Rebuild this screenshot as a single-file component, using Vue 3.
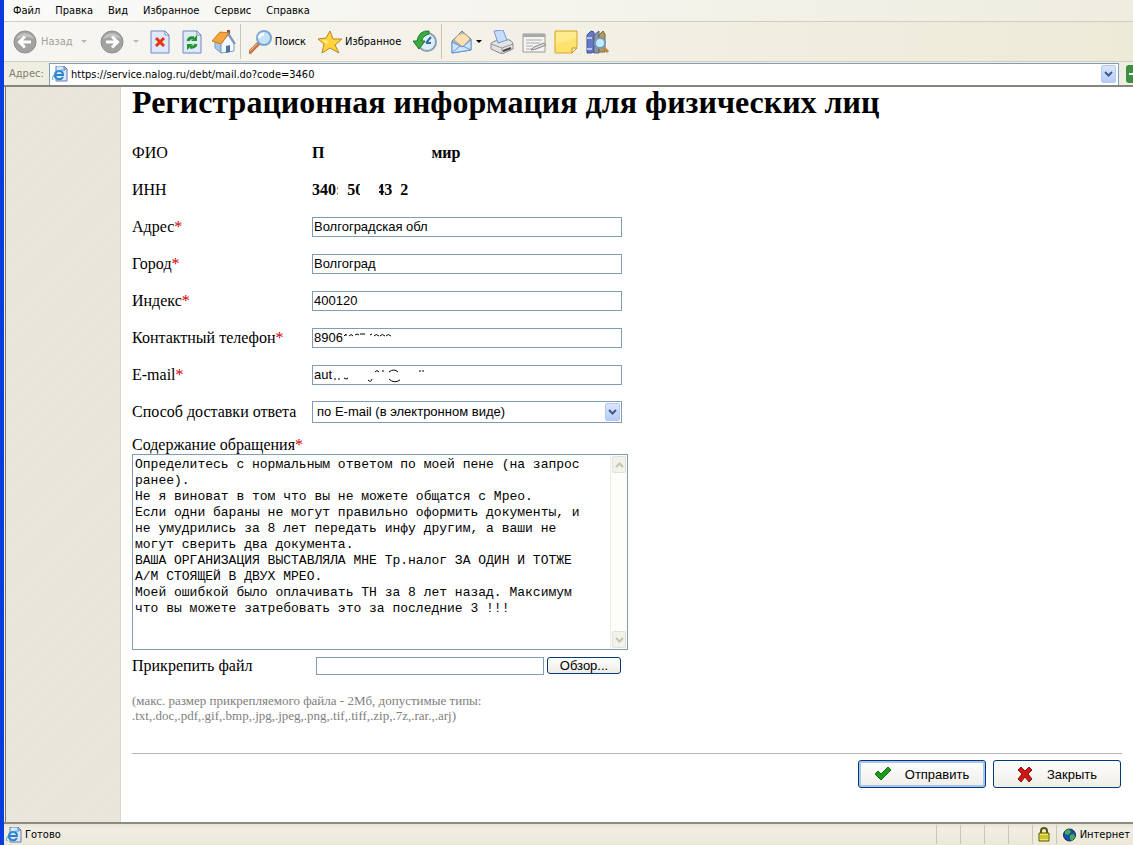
<script setup>
import { ref } from 'vue'

// Browser menu items
const menu = ['Файл', 'Правка', 'Вид', 'Избранное', 'Сервис', 'Справка']

const url = ref('https://service.nalog.ru/debt/mail.do?code=3460')

// Text fields of the form
const fields = ref([
  { id: 'address', label: 'Адрес', value: 'Волгоградская обл' },
  { id: 'city', label: 'Город', value: 'Волгоград' },
  { id: 'index', label: 'Индекс', value: '400120' },
  { id: 'phone', label: 'Контактный телефон', value: '8906' },
  { id: 'email', label: 'E-mail', value: 'aut' }
])

const delivery = ref('email')
const fileName = ref('')

const message = ref(
  [
    'Определитесь с нормальным ответом по моей пене (на запрос ранее).',
    'Не я виноват в том что вы не можете общатся с Мрео.',
    'Если одни бараны не могут правильно оформить документы, и не умудрились за 8 лет передать инфу другим, а ваши не могут сверить два документа.',
    'ВАША ОРГАНИЗАЦИЯ ВЫСТАВЛЯЛА МНЕ Тр.налог ЗА ОДИН И ТОТЖЕ А/М СТОЯЩЕЙ В ДВУХ МРЕО.',
    'Моей ошибкой было оплачивать ТН за 8 лет назад. Максимум что вы можете затребовать это за последние 3 !!!'
  ].join('\n')
)
</script>

<template>
  <div class="browser">
    <!-- Menu bar -->
    <nav class="menu-bar">
      <button v-for="item in menu" :key="item" type="button">{{ item }}</button>
    </nav>

    <!-- Toolbar -->
    <div class="toolbar">
      <button type="button" class="tool back" disabled>
        <svg width="24" height="24" viewBox="0 0 24 24">
          <circle cx="12" cy="12" r="11" fill="#a2a2a0" stroke="#8f8f8d" />
          <path d="M3 9a10 10 0 0 1 18 0q-9-4-18 0z" fill="#c4c4c2" />
          <path d="M18 12H7M12 6.500l-5.500 5.500 5.500 5.500" fill="none" stroke="#fff" stroke-width="3" />
        </svg>
        <span>Назад</span>
        <i class="arrow"></i>
      </button>
      <button type="button" class="tool forward" disabled aria-label="Вперед">
        <svg width="24" height="24" viewBox="0 0 24 24">
          <circle cx="12" cy="12" r="11" fill="#a2a2a0" stroke="#8f8f8d" />
          <path d="M3 9a10 10 0 0 1 18 0q-9-4-18 0z" fill="#c4c4c2" />
          <path d="M6 12h11M12 6.500l5.500 5.500-5.500 5.500" fill="none" stroke="#fff" stroke-width="3" />
        </svg>
        <i class="arrow"></i>
      </button>
      <button type="button" class="tool" aria-label="Остановить">
        <svg width="24" height="24" viewBox="0 0 24 24">
          <path d="M3 1h14l4 4v18H3z" fill="#dfe9fb" stroke="#7388bd" />
          <path d="M17 1v4h4z" fill="#fff" stroke="#7388bd" />
          <path d="M8 8l8 8M16 8l-8 8" stroke="#e5350f" stroke-width="3" />
        </svg>
      </button>
      <button type="button" class="tool" aria-label="Обновить">
        <svg width="24" height="24" viewBox="0 0 24 24">
          <path d="M3 1h14l4 4v18H3z" fill="#dfe9fb" stroke="#7388bd" />
          <path d="M17 1v4h4z" fill="#fff" stroke="#7388bd" />
          <path d="M8 11q1-4 6-3M16 14q-1 4-6 3" fill="none" stroke="#21962a" stroke-width="3" />
          <path d="M17 5v6h-6zM7 20v-6h6z" fill="#21962a" />
        </svg>
      </button>
      <button type="button" class="tool" aria-label="Домой">
        <svg width="24" height="24" viewBox="0 0 24 24">
          <path d="M15 0h3v6h-3z" fill="#a9482c" />
          <path d="M3 11l6 3v9l-6-5z" fill="#a9c6ea" stroke="#7c9cc8" />
          <path d="M9 14l7-9 6 9v7l-13 2z" fill="#f5f9ff" stroke="#7c9cc8" />
          <path d="M14 16l4-1v7l-4 1z" fill="#4d74a8" />
          <path d="M0 11L8 2l9 1-8 11z" fill="#f3a63c" stroke="#cf7b20" />
          <path d="M16 3l7 11" stroke="#8093b5" stroke-width="2" />
        </svg>
      </button>
      <i class="divider"></i>
      <button type="button" class="tool search">
        <svg width="24" height="24" viewBox="0 0 24 24">
          <path d="M9 14l-8 8" stroke="#c7774a" stroke-width="4" stroke-linecap="round" />
          <path d="M8 14l-7 7" stroke="#f0bd94" stroke-width="1" />
          <circle cx="15" cy="8" r="7" fill="#c4e4fb" stroke="#7ba5d3" stroke-width="2" />
          <path d="M10 8q1-4 5-4" fill="none" stroke="#fff" stroke-width="3" />
        </svg>
        <span>Поиск</span>
      </button>
      <button type="button" class="tool favorites">
        <svg width="25" height="24" viewBox="0 0 25 24">
          <path d="M12 1l3 8 9 0-7 6 4 8-9-5-8 5 2-9-6-5 8-1z" fill="#fdd43a" stroke="#bd8420" stroke-linejoin="round" />
          <path d="M12 4l-2 7-6-1 5 4" fill="#fff3a0" />
        </svg>
        <span>Избранное</span>
      </button>
      <button type="button" class="tool" aria-label="Журнал">
        <svg width="24" height="24" viewBox="0 0 24 24">
          <circle cx="14" cy="12" r="9" fill="#dceefa" stroke="#8c9fae" stroke-width="2" />
          <path d="M13 13l5-6M13 13h5" stroke="#356da8" stroke-width="2" />
          <path d="M16 1Q6 0 4 11H0l6 8 6-8H9q0-5 7-7z" fill="#3baa3f" stroke="#1c7928" />
        </svg>
      </button>
      <i class="divider"></i>
      <button type="button" class="tool mail" aria-label="Почта">
        <svg width="24" height="24" viewBox="0 0 24 24">
          <path d="M2 11L12 1l9 8v11L2 23z" fill="#8bb8ed" stroke="#6488b9" />
          <path d="M4 10q8-13 16-1l-7 8z" fill="#fce1b5" stroke="#d7a56f" />
          <path d="M2 12l10 5 9-7v10L2 23z" fill="#cde4fd" stroke="#6a94cb" />
          <path d="M2 23l8-7M21 20l-8-4" stroke="#6a94cb" />
        </svg>
        <i class="arrow dark"></i>
      </button>
      <button type="button" class="tool" aria-label="Печать">
        <svg width="24" height="24" viewBox="0 0 24 24">
          <path d="M1 13l8-4 11 1 3 3v6l-11 5-11-5z" fill="#e2e2e3" stroke="#8b8b90" />
          <path d="M4 1l9-1 4 10-9 3z" fill="#c5ddfa" stroke="#7899c9" />
          <path d="M1 14l11 4 11-4M12 18v5" fill="none" stroke="#94949a" />
          <path d="M13 21l8-3" stroke="#444" stroke-width="2" />
        </svg>
      </button>
      <button type="button" class="tool" aria-label="Правка">
        <svg width="24" height="24" viewBox="0 0 24 24">
          <path d="M1 4h22v18H1z" fill="#f4f4f2" stroke="#989898" />
          <path d="M1 4h22v3H1z" fill="#a9a9a9" />
          <path d="M4 10h16M4 13h14M4 16h7M4 19h6" stroke="#aaa" />
          <path d="M9 20l3-3 10-4 2 2-10 4z" fill="#ddd" stroke="#888" />
        </svg>
      </button>
      <button type="button" class="tool" aria-label="Заметки">
        <svg width="24" height="24" viewBox="0 0 24 24">
          <path d="M1 1h22v16l-5 6H1z" fill="#ffe16e" stroke="#d2a52c" />
          <path d="M2 2h20v6L2 14z" fill="#ffea8c" />
          <path d="M18 23v-5h5z" fill="#fff5bd" stroke="#c39423" />
        </svg>
      </button>
      <button type="button" class="tool" aria-label="Справочные материалы">
        <svg width="24" height="24" viewBox="0 0 24 24">
          <path d="M1 5l4-4 3 1v20l-3 1H1z" fill="#6678c8" stroke="#43519a" />
          <path d="M1 8h5M1 19h5" stroke="#b7c2f4" stroke-width="2" />
          <path d="M8 5l5-4v22H8z" fill="#8a93a8" stroke="#5c6479" />
          <path d="M13 5l4-4 2 3v18h-6z" fill="#b39a5d" stroke="#7a683d" />
          <path d="M17 17l5 5" stroke="#bc8a45" stroke-width="3" />
          <circle cx="14" cy="13" r="5" fill="#c9eafa" stroke="#6d9cc5" stroke-width="2" />
        </svg>
      </button>
    </div>

    <!-- Address bar -->
    <div class="address-bar">
      <label for="url">Адрес:</label>
      <div class="address-box">
        <svg class="ie" width="16" height="16" viewBox="0 0 16 16">
          <path d="M4 0h8l3 3v12H4z" fill="#dbe8fb" stroke="#5f7db4" />
          <path d="M12 0v3h3" fill="none" stroke="#5f7db4" />
          <path d="M11 11q-2 3-5 2-4-1-3-5 1-3 4-3 4 0 4 4H4" fill="none" stroke="#2d83c9" stroke-width="2" />
          <path d="M1 14q-2-3 4-8 5-3 8-2" fill="none" stroke="#3a9bdc" />
        </svg>
        <input id="url" v-model="url" type="text" />
        <button type="button" class="drop" aria-label="Показать список">
          <svg width="9" height="6" viewBox="0 0 9 6"><path d="M1 1l3.500 3.500L8 1" fill="none" stroke="#3f5a87" stroke-width="2" /></svg>
        </button>
      </div>
      <button type="button" class="go" aria-label="Переход">
        <svg width="7" height="18" viewBox="0 0 7 18"><path d="M3 9h4" stroke="#fff" stroke-width="2" /></svg>
      </button>
    </div>

    <!-- Page -->
    <div class="page">
      <aside class="side"></aside>
      <main class="content">
        <h1>Регистрационная информация для физических лиц</h1>
        <form @submit.prevent>
          <div class="row">
            <span class="name">ФИО</span>
            <div class="person"><b>П</b><b>мир</b></div>
          </div>
          <div class="row">
            <span class="name">ИНН</span>
            <!-- Some digits are partly erased -->
            <div class="inn">
              <b class="worn-end">340:</b>
              <b class="worn-end">50</b>
              <b class="worn-start">43</b>
              <b>2</b>
            </div>
          </div>
          <div v-for="field in fields" :key="field.id" class="row">
            <label class="name" :for="field.id">{{ field.label }}<em>*</em></label>
            <div class="control">
              <input :id="field.id" v-model="field.value" type="text" />
              <!-- Remains of the erased characters -->
              <svg v-if="field.id === 'phone'" class="remains phone" width="60" height="20" viewBox="0 0 60 20">
                <path d="M1 8l2-2v2M6 8q2-3 4 0M12 7q2-2 4 0M17 6h5M27 7l2-1M31 8q2-3 5 0M37 8q2-3 5 0M43 8q2-3 5 0" fill="none" stroke="#000" />
              </svg>
              <svg v-if="field.id === 'email'" class="remains email" width="96" height="20" viewBox="0 0 96 20">
                <path d="M1 14h2M5 14h2M11 13q2 2 4 0M35 15q3 3 4-1M42 7q2-3 4 0M50 5v2M56 7q5-4 9 0M56 14q5 5 11 1M90 5v2M87 5v2" fill="none" stroke="#000" />
              </svg>
            </div>
          </div>
          <div class="row">
            <label class="name" for="delivery">Способ доставки ответа</label>
            <div class="control select">
              <select id="delivery" v-model="delivery">
                <option value="email">по E-mail (в электронном виде)</option>
                <option value="post">по почте</option>
              </select>
              <span class="drop">
                <svg width="9" height="6" viewBox="0 0 9 6"><path d="M1 1l3.500 3.500L8 1" fill="none" stroke="#3f5a87" stroke-width="2" /></svg>
              </span>
            </div>
          </div>

          <label class="message-label" for="message">Содержание обращения<em>*</em></label>
          <div class="message">
            <textarea id="message" v-model="message" spellcheck="false"></textarea>
            <div class="scrollbar">
              <span><svg width="9" height="6" viewBox="0 0 9 6"><path d="M1 5l3.500-3.500L8 5" fill="none" stroke="#c3c1b4" stroke-width="2" /></svg></span>
              <span><svg width="9" height="6" viewBox="0 0 9 6"><path d="M1 1l3.500 3.500L8 1" fill="none" stroke="#c3c1b4" stroke-width="2" /></svg></span>
            </div>
          </div>

          <div class="file-row">
            <label for="file">Прикрепить файл</label>
            <input id="file" v-model="fileName" type="text" />
            <button type="button">Обзор...</button>
          </div>
          <p class="note">
            (макс. размер прикрепляемого файла - 2Мб, допустимые типы:<br />
            .txt,.doc,.pdf,.gif,.bmp,.jpg,.jpeg,.png,.tif,.tiff,.zip,.7z,.rar.,.arj)
          </p>

          <div class="actions">
            <button type="submit" class="primary">
              <svg width="16" height="14" viewBox="0 0 16 14"><path d="M0 7l3-3 3 3 7-7 3 3-10 10z" fill="#1c9a1f" stroke="#127016" stroke-width="1" /></svg>
              <span>Отправить</span>
            </button>
            <button type="button">
              <svg width="16" height="15" viewBox="0 0 16 15"><path d="M1 3l3-3 4 4 4-4 3 3-4 4 4 5-3 3-4-5-4 5-3-3 4-5z" fill="#cf1515" stroke="#8f1010" stroke-width="1" /></svg>
              <span>Закрыть</span>
            </button>
          </div>
        </form>
      </main>
    </div>

    <!-- Status bar -->
    <footer class="status">
      <svg class="ie" width="16" height="16" viewBox="0 0 16 16">
        <path d="M4 0h8l3 3v12H4z" fill="#dbe8fb" stroke="#5f7db4" />
        <path d="M12 0v3h3" fill="none" stroke="#5f7db4" />
        <path d="M11 11q-2 3-5 2-4-1-3-5 1-3 4-3 4 0 4 4H4" fill="none" stroke="#2d83c9" stroke-width="2" />
        <path d="M1 14q-2-3 4-8 5-3 8-2" fill="none" stroke="#3a9bdc" />
      </svg>
      <span class="ready">Готово</span>
      <i v-for="n in 4" :key="n" class="cell"></i>
      <span class="cell">
        <svg width="12" height="15" viewBox="0 0 12 15">
          <path d="M3 7V4q0-3 3-3t3 3v3" fill="none" stroke="#57570a" stroke-width="2" />
          <path d="M1 6h10v8H1z" fill="#efe94a" stroke="#57570a" />
          <path d="M2 9h8M2 11h8" stroke="#a5a01e" />
        </svg>
      </span>
      <span class="zone">
        <svg width="13" height="14" viewBox="0 0 13 14">
          <circle cx="6.500" cy="7" r="6" fill="#1c4da8" stroke="#12295e" />
          <path d="M2 3l4-2 2 3-3 3-3-1zM7 7l4-1 1 3-3 4-2-2z" fill="#45b04a" />
        </svg>
        Интернет
      </span>
    </footer>
  </div>
</template>

<style>
body {
  margin: 0;
}
</style>

<style scoped>
.browser {
  display: flex;
  flex-direction: column;
  box-sizing: border-box;
  min-height: 100vh;
  border-left: 4px solid #0a3be0;
  background: #f1efe2;
  color: #000;
  font: 11px "DejaVu Sans Condensed", "DejaVu Sans", sans-serif;
  overflow: hidden;
}

button,
input,
select,
textarea {
  box-sizing: border-box;
  margin: 0;
  color: inherit;
  outline: none;
}

svg {
  display: block;
  flex: none;
}

/* Menu bar */
.menu-bar {
  display: flex;
  gap: 15px;
  height: 21px;
  padding-left: 9px;
  border-bottom: 1px solid #d2cfc0;
  background: linear-gradient(90deg, #fafaf9, #efede0);
}

.menu-bar button {
  padding: 0;
  border: 0;
  background: none;
  font: inherit;
}

/* Toolbar */
.toolbar {
  display: flex;
  align-items: center;
  gap: 8px;
  height: 39px;
  padding-left: 9px;
  border-bottom: 1px solid #d2cfc0;
  background: linear-gradient(90deg, #f7f6f3, #eeead8);
}

.tool {
  display: flex;
  align-items: center;
  gap: 4px;
  padding: 0;
  border: 0;
  background: none;
  font: inherit;
}

.tool.back {
  color: #a3a297;
  margin-right: 5px;
}

.tool.back .arrow {
  margin-left: 4px;
}

.tool.forward {
  gap: 9px;
  margin-right: 1px;
}

.tool.search,
.tool.favorites,
.tool.mail {
  gap: 2px;
}

.tool.favorites {
  margin: 0 4px;
}

.arrow {
  border: 3px solid transparent;
  border-top-color: #b9b7a9;
  border-bottom: 0;
}

.arrow.dark {
  border-top-color: #000;
}

.divider {
  width: 1px;
  height: 35px;
  margin-left: -4px;
  background: #c9c5b2;
}

/* Address bar */
.address-bar {
  display: flex;
  align-items: center;
  height: 25px;
  padding-left: 5px;
  background: #f0eee1;
  border-bottom: 2px solid #858580;
  box-sizing: border-box;
}

.address-bar label {
  width: 40px;
  color: #7e7d74;
}

.address-box {
  display: flex;
  flex: 1;
  align-items: center;
  height: 22px;
  box-sizing: border-box;
  padding: 0 2px;
  border: 1px solid #7f9db9;
  border-bottom: 0;
  background: #fff;
}

.address-box input {
  flex: 1;
  min-width: 0;
  padding: 0 3px;
  border: 0;
  background: none;
  font: inherit;
}

.drop {
  display: flex;
  align-items: center;
  justify-content: center;
  width: 15px;
  height: 18px;
  padding: 0;
  border: 1px solid #b4c8f4;
  border-radius: 2px;
  box-sizing: border-box;
  background: linear-gradient(#dbe6fd, #b7cbf6);
}

.go {
  width: 7px;
  height: 18px;
  margin-left: 7px;
  padding: 0;
  border: 0;
  border-radius: 3px 0 0 3px;
  background: #3c9040;
}

/* Page */
.page {
  display: flex;
  flex: 1;
  margin-left: 1px;
  border-left: 1px solid #77766e;
  background: #fff;
  font-family: "Liberation Serif", "Times New Roman", serif;
  font-size: 16px;
}

.side {
  width: 114px;
  border-right: 1px solid #dad7cb;
  background: repeating-linear-gradient(135deg, #e9e6db 0 7px, #e8e5da 7px 9px);
}

.content {
  flex: 1;
  min-width: 0;
  padding: 0 11px 32px;
}

h1 {
  margin: 0 0 17px;
  font-size: 32px;
  line-height: 30px;
}

em {
  color: #d00000;
  font-style: normal;
}

.row {
  display: flex;
  align-items: center;
  height: 37px;
}

.name {
  width: 180px;
}

.person {
  display: flex;
  gap: 107px;
}

.inn {
  display: flex;
  gap: 6px;
}

.inn b {
  position: relative;
}

.worn-end::after,
.worn-start::after {
  content: '';
  position: absolute;
  top: 0;
  bottom: 0;
  width: 3px;
  background: #fff;
}

.worn-end::after {
  right: 0;
}

.worn-start {
  margin: 0 2px 0 7px;
}

.worn-start::after {
  left: 0;
}

.control {
  position: relative;
  width: 310px;
}

.control input {
  display: block;
  width: 100%;
  height: 20px;
  padding: 0 1px;
  border: 1px solid #7f9db9;
  background: #fff;
  font: 13px "Liberation Sans", Arial, sans-serif;
}

.remains {
  position: absolute;
  top: 0;
}

.remains.phone {
  left: 31px;
}

.remains.email {
  left: 21px;
}

.control select {
  display: block;
  width: 100%;
  height: 22px;
  padding: 0 4px;
  border: 1px solid #7f9db9;
  border-radius: 0;
  background: #fff;
  appearance: none;
  font: 13px "Liberation Sans", Arial, sans-serif;
}

.select .drop {
  position: absolute;
  top: 2px;
  right: 2px;
  pointer-events: none;
}

.message-label {
  display: block;
  padding-top: 5px;
  line-height: 19px;
}

.message {
  display: flex;
  width: 496px;
  height: 196px;
  box-sizing: border-box;
  border: 1px solid #7f9db9;
}

.message textarea {
  flex: 1;
  padding: 2px 20px 2px 2px;
  border: 0;
  background: #fff;
  font: 13px/16px "Liberation Mono", "Courier New", monospace;
  resize: none;
  overflow: hidden;
}

.scrollbar {
  display: flex;
  flex-direction: column;
  justify-content: space-between;
  width: 17px;
  padding: 1px;
  border-left: 1px solid #eeede5;
  box-sizing: border-box;
  background: #fdfdf9;
}

.scrollbar span {
  display: flex;
  align-items: center;
  justify-content: center;
  height: 15px;
  border: 1px solid #e3e1d6;
  border-radius: 2px;
  background: #f3f2ea;
}

.file-row {
  display: flex;
  align-items: center;
  height: 31px;
}

.file-row label {
  width: 184px;
}

.file-row input {
  width: 228px;
  height: 18px;
  margin-right: 3px;
  border: 1px solid #7f9db9;
  font: 13px "Liberation Sans", Arial, sans-serif;
}

.file-row button {
  width: 74px;
  height: 17px;
  padding: 0;
  border: 1px solid #003c74;
  border-radius: 3px;
  background: linear-gradient(#fff, #ecebe5);
  font: 13px/15px "Liberation Sans", Arial, sans-serif;
}

.note {
  margin: 12px 0 30px;
  color: #808080;
  font-size: 13px;
  line-height: 15px;
}

.actions {
  display: flex;
  justify-content: flex-end;
  gap: 7px;
  padding: 6px 1px 0;
  border-top: 1px solid #b5b5b5;
}

.actions button {
  display: flex;
  align-items: center;
  justify-content: center;
  gap: 14px;
  width: 128px;
  height: 28px;
  padding: 0;
  border: 1px solid #003c74;
  border-radius: 3px;
  background: linear-gradient(#fff, #eeede7);
  font: 13px "Liberation Sans", Arial, sans-serif;
}

.actions .primary {
  box-shadow: inset 0 0 0 2px #a9c4f0;
}

/* Status bar */
.status {
  display: flex;
  align-items: center;
  height: 23px;
  padding-left: 2px;
  border-top: 2px solid #8d8b80;
  box-sizing: border-box;
  background: linear-gradient(#e6e3d3, #f1efe4 5px, #ebe8d8);
}

.ready {
  flex: 1;
  padding-left: 3px;
}

.cell {
  display: flex;
  align-items: center;
  justify-content: center;
  width: 24px;
  height: 19px;
  border-left: 1px solid #cbc7b5;
  box-sizing: border-box;
}

.zone {
  display: flex;
  align-items: center;
  gap: 4px;
  height: 19px;
  padding: 0 3px 0 6px;
  border-left: 1px solid #cbc7b5;
}
</style>
